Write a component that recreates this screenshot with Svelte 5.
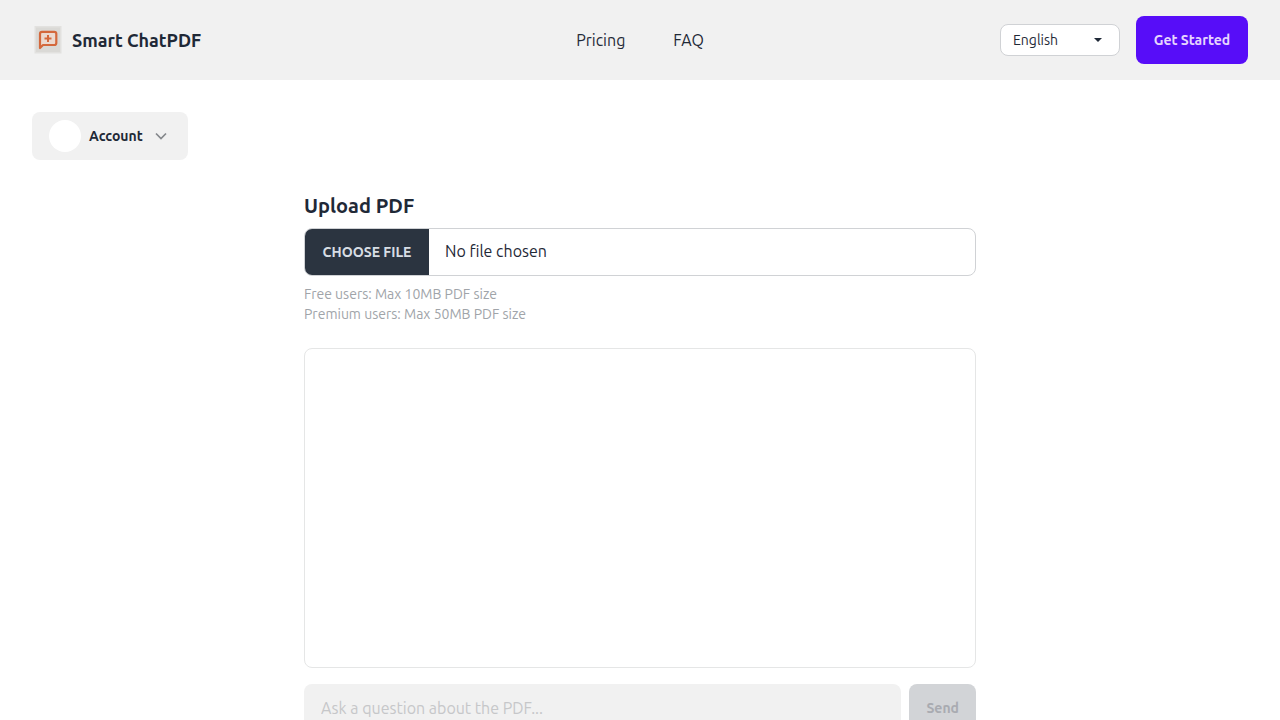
<script>
  let language = $state('en');
  let question = $state('');
  let files = $state();
  let messages = $state([]);

  const languages = [
    { code: 'en', name: 'English' },
    { code: 'es', name: 'Español' },
    { code: 'fr', name: 'Français' },
    { code: 'de', name: 'Deutsch' }
  ];

  let canSend = $derived(question.trim() !== '' && files?.length > 0);

  function send(event) {
    event.preventDefault();
    if (!canSend) return;
    messages.push(question);
    question = '';
  }
</script>

<header>
  <a class="brand" href="/">
    <svg class="logo" viewBox="0 0 32 32" aria-hidden="true">
      <rect x="2.5" y="2" width="27" height="27.5" fill="#e2e1df" />
      <rect x="4" y="3.5" width="24" height="24.5" fill="#dad9d6" />
      <path
        d="M8 24V9.8a2 2 0 0 1 2-2h12.3a2 2 0 0 1 2 2v9.2a2 2 0 0 1-2 2H11z"
        fill="#ecd9cf"
        stroke="#d4683c"
        stroke-width="2.2"
        stroke-linejoin="round"
      />
      <path d="M16 11v7M12.5 14.5h7" stroke="#d4683c" stroke-width="2" />
    </svg>
    Smart ChatPDF
  </a>

  <nav>
    <a href="/pricing">Pricing</a>
    <a href="/faq">FAQ</a>
  </nav>

  <div class="actions">
    <select class="language" aria-label="Language" bind:value={language}>
      {#each languages as item}
        <option value={item.code}>{item.name}</option>
      {/each}
    </select>
    <button class="start" type="button">Get Started</button>
  </div>
</header>

<main>
  <button class="account" type="button">
    <span class="avatar"></span>
    Account
    <svg class="chevron" viewBox="0 0 20 20" aria-hidden="true">
      <path d="M5 7.5l5 5 5-5" fill="none" stroke="#85888c" stroke-width="1.7" />
    </svg>
  </button>

  <div class="content">
    <label class="title" for="pdf">Upload PDF</label>
    <input class="file" id="pdf" type="file" accept="application/pdf" bind:files />
    <p class="hint">Free users: Max 10MB PDF size</p>
    <p class="hint">Premium users: Max 50MB PDF size</p>

    <div class="chat">
      {#each messages as message}
        <p>{message}</p>
      {/each}
    </div>

    <form onsubmit={send}>
      <input
        class="question"
        type="text"
        placeholder="Ask a question about the PDF..."
        aria-label="Question"
        bind:value={question}
      />
      <button class="send" disabled={!canSend}>Send</button>
    </form>
  </div>
</main>

<style>
  :global(body) {
    background: #fff;
    color: #1f2937;
    font: 16px/24px Ubuntu, 'Noto Sans', sans-serif;
  }

  * {
    box-sizing: border-box;
  }

  a {
    color: inherit;
    text-decoration: none;
  }

  button,
  input,
  select {
    font: inherit;
    color: inherit;
  }

  button {
    border: none;
    border-radius: 8px;
    cursor: pointer;
  }

  header {
    display: grid;
    grid-template-columns: 1fr auto 1fr;
    align-items: center;
    padding: 16px 32px;
    background: #f1f1f1;
  }

  .brand {
    display: flex;
    align-items: center;
    gap: 8px;
    font-size: 18px;
    font-weight: 700;
  }

  .logo {
    width: 32px;
    height: 32px;
  }

  nav {
    display: flex;
    gap: 48px;
  }

  .actions {
    display: flex;
    justify-content: flex-end;
    align-items: center;
    gap: 16px;
  }

  .language {
    appearance: none;
    width: 120px;
    height: 32px;
    padding: 0 32px 0 12px;
    border: 1px solid #d0d2d5;
    border-radius: 8px;
    font-size: 14px;
    background: #fff
      url("data:image/svg+xml,%3Csvg xmlns='http://www.w3.org/2000/svg' viewBox='0 0 8 4'%3E%3Cpath d='M0 0h8L4 4z' fill='%231f2937'/%3E%3C/svg%3E")
      no-repeat right 17px center / 8px 4px;
  }

  .start {
    min-width: 112px;
    height: 48px;
    padding: 0 17px;
    background: #570df8;
    color: #e6d5fe;
    font-size: 14px;
    font-weight: 700;
  }

  main {
    padding: 32px;
  }

  .account {
    display: flex;
    align-items: center;
    gap: 8px;
    height: 48px;
    padding: 0 17px;
    background: #f1f1f1;
    font-size: 14px;
    font-weight: 700;
  }

  .avatar {
    width: 32px;
    height: 32px;
    border-radius: 50%;
    background: #fff;
  }

  .chevron {
    width: 20px;
    height: 20px;
  }

  .content {
    max-width: 672px;
    margin: 32px auto 0;
  }

  .title {
    display: block;
    margin-bottom: 8px;
    font-size: 20px;
    font-weight: 700;
    line-height: 28px;
  }

  .file {
    display: block;
    width: 100%;
    height: 48px;
    margin-bottom: 8px;
    border: 1px solid #d0d2d5;
    border-radius: 8px;
    line-height: 44px;
    overflow: hidden;
  }

  .file::file-selector-button {
    min-width: 124px;
    height: 46px;
    margin: 0 16px 0 0;
    padding: 0 17px;
    border: none;
    background: #2b3440;
    color: #d7dde4;
    font: inherit;
    font-size: 14px;
    font-weight: 700;
    text-transform: uppercase;
  }

  .hint {
    margin: 0;
    color: #a0a4a9;
    font-size: 14px;
    line-height: 20px;
  }

  .chat {
    height: 320px;
    margin: 24px 0 16px;
    padding: 0 16px;
    border: 1px solid #e5e6e6;
    border-radius: 8px;
    overflow-y: auto;
  }

  form {
    display: flex;
    gap: 8px;
  }

  .question {
    flex: 1;
    min-width: 0;
    height: 48px;
    padding: 0 17px;
    border: none;
    border-radius: 8px;
    background: #f1f1f1;
  }

  .question::placeholder {
    color: #c6c7c9;
  }

  .send {
    height: 48px;
    padding: 0 17px;
    background: #570df8;
    color: #e6d5fe;
    font-size: 14px;
    font-weight: 700;
  }

  .send:disabled {
    background: #d2d4d7;
    color: #a9abb1;
    cursor: default;
  }
</style>
